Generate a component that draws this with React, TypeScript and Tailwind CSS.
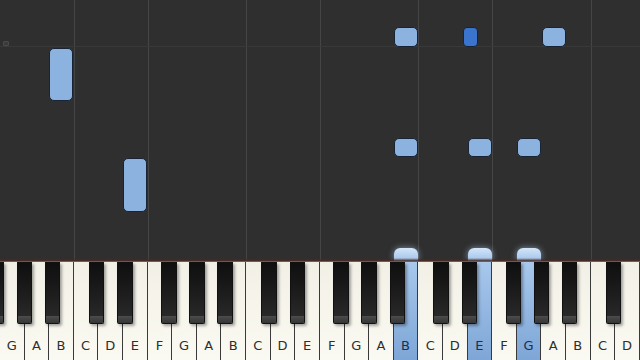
import React from 'react';

const KEY_W = 640 / 26;
const NAMES = ['G', 'A', 'B', 'C', 'D', 'E', 'F'];
// black key offset from the boundary after the white key, by name
const BLACK_OFFSET: Record<string, number> = { C: -2, D: 2, F: -3.5, G: 0, A: 3.5 };

const PRESSED = [16, 19, 21];

type Note = { x: number; y: number; w: number; h: number; dark?: boolean };

const notes: Note[] = [
  { x: 49, y: 48, w: 24, h: 53 },
  { x: 123, y: 158, w: 24, h: 54 },
  { x: 394, y: 27, w: 24, h: 20 },
  { x: 463, y: 27, w: 14.5, h: 20, dark: true },
  { x: 541.5, y: 27, w: 24.5, h: 20 },
  { x: 394, y: 137.5, w: 24, h: 19.5 },
  { x: 468, y: 137.5, w: 24, h: 19.5 },
  { x: 517, y: 137.5, w: 24, h: 19.5 },
];

const whiteKeys = Array.from({ length: 26 }, (_, i) => NAMES[i % 7]);

// centre of each black key: the boundary after a C, D, F, G or A, nudged
const blackKeys: { center: number }[] = [{ center: 0 + BLACK_OFFSET.F }];
whiteKeys.forEach((n, i) => {
  if (n in BLACK_OFFSET && i < 25) {
    blackKeys.push({ center: (i + 1) * KEY_W + BLACK_OFFSET[n] });
  }
});

// vertical guide lines at C and F starts
const guides = whiteKeys
  .map((n, i) => (n === 'C' || n === 'F' ? i * KEY_W : -1))
  .filter((x) => x > 0);

const NoteArea: React.FC = () => (
  <div className="relative h-[261px] w-full overflow-hidden bg-[#2f2f2f]">
    {guides.map((x) => (
      <div key={x} className="absolute top-0 bottom-0 w-px bg-[#454545]" style={{ left: Math.round(x) }} />
    ))}
    {/* measure line */}
    <div className="absolute left-0 right-0 top-[46px] h-px bg-[#393939]" />
    <div className="absolute left-[3px] top-[41px] h-[5px] w-[6px] rounded-[1px] border border-[#4a4a4a] bg-[#3a3a3a]" />

    {notes.map((n, i) => (
      <div
        key={i}
        className={
          'absolute border-[1.5px] border-[#182335] ' +
          (n.dark ? 'rounded-[4px] bg-[#3a74cc]' : 'rounded-[5px] bg-[#8cb3df]')
        }
        style={{ left: n.x, top: n.y, width: n.w, height: n.h }}
      />
    ))}

    {/* notes entering the keyboard */}
    {PRESSED.map((i) => (
      <div
        key={i}
        className="absolute bottom-0 h-[13px] rounded-t-[6px] bg-gradient-to-b from-[#d4e6f8] to-[#9fc2e8] shadow-[0_0_6px_rgba(180,210,245,0.6)]"
        style={{ left: i * KEY_W + 0.5, width: KEY_W - 1 }}
      />
    ))}
    <div className="absolute bottom-0 left-0 right-0 h-[3px] bg-gradient-to-b from-transparent to-[#4a2a24]" />
  </div>
);

const Keyboard: React.FC = () => (
  <div className="relative h-[99px] w-full border-t-[1.5px] border-[#c03a30] bg-[#2a2a2a]">
    <div className="flex h-full">
      {whiteKeys.map((n, i) => {
        const pressed = PRESSED.includes(i);
        return (
          <div
            key={i}
            className={
              'flex h-full shrink-0 flex-col items-center justify-end border-r border-[#3a3a3a] pb-[8px] ' +
              (pressed
                ? 'bg-gradient-to-b from-[#a8c8ec] to-[#7ea6d6] text-[#1a3050]'
                : 'bg-gradient-to-b from-[#f2f0e6] to-[#fbfaf2] text-[#2e2e2e]')
            }
            style={{ width: KEY_W }}
          >
            <span className="font-['DejaVu_Sans',sans-serif] text-[13px] leading-none">{n}</span>
          </div>
        );
      })}
    </div>
    {blackKeys.map((b, i) => (
      <div
        key={i}
        className="absolute top-0 flex h-[62px] w-[15.5px] flex-col justify-end rounded-b-[2px] border-x border-b border-[#111111] bg-gradient-to-b from-[#0f0f0f] via-[#1c1c1c] to-[#2c2c2c] shadow-[2px_2px_3px_rgba(0,0,0,0.35)]"
        style={{ left: b.center - 7.75 }}
      >
        <div className="h-[7px] bg-gradient-to-b from-[#4c4c4c] to-[#353535]" />
      </div>
    ))}
  </div>
);

export default function App() {
  return (
    <div className="flex h-[360px] w-[640px] flex-col overflow-hidden bg-[#2f2f2f]">
      <NoteArea />
      <Keyboard />
    </div>
  );
}
